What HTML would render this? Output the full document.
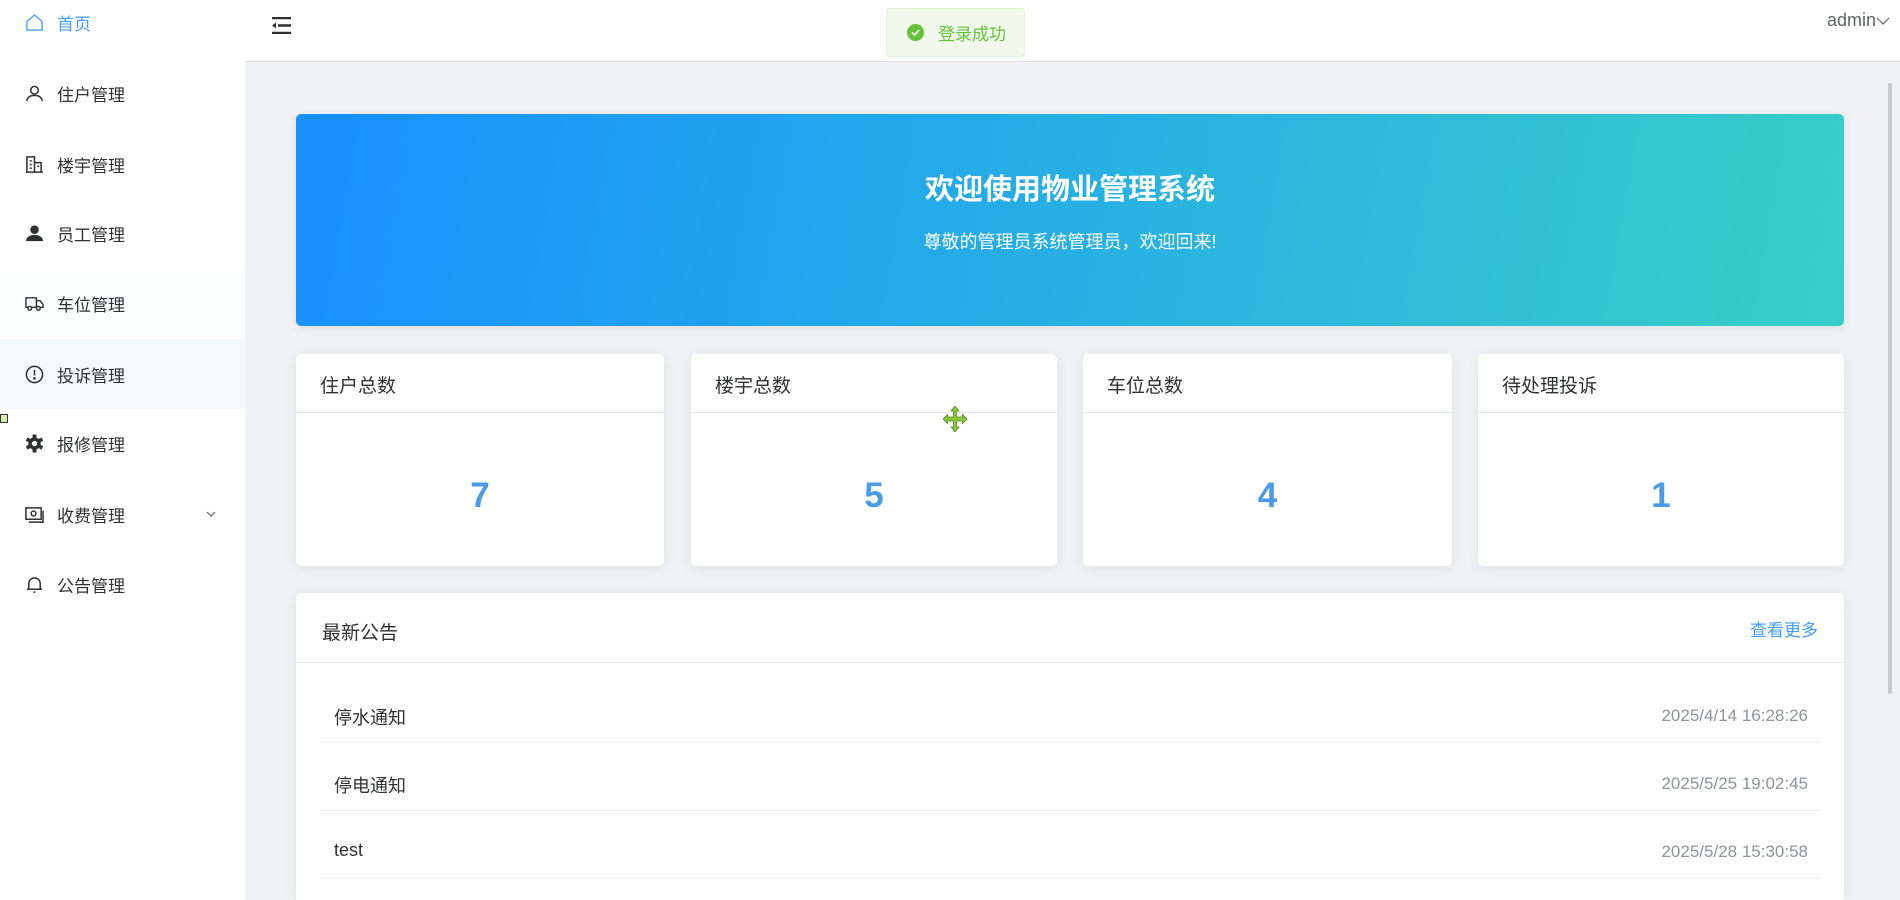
<!DOCTYPE html>
<html style="overflow:hidden;width:1900px;height:900px"><head><meta charset="utf-8">
<style>
*{box-sizing:border-box;margin:0;padding:0}
body{width:1900px;height:900px;overflow:hidden;background:#f0f2f5;font-family:"Liberation Sans","Noto Sans CJK SC",sans-serif;position:relative;color:#303133}
.side{position:absolute;left:0;top:0;width:245px;height:900px;background:#fff}
.item{position:absolute;left:0;width:245px;height:70px;display:flex;align-items:center;font-size:17px;color:#303133}
.item svg{position:absolute;left:25px;width:19px;height:19px}
.item span{position:absolute;left:57px}
.hdr{position:absolute;left:245px;top:0;right:0;height:62px;background:#fff;border-bottom:1px solid #dcdfe6}
.banner{position:absolute;left:296px;top:114px;width:1548px;height:212px;border-radius:5px;background:linear-gradient(100deg,#1890ff,#36cfc9);color:#fff;text-align:center;box-shadow:0 2px 10px rgba(0,0,0,.08)}
.card{position:absolute;top:354px;height:212px;background:#fff;border-radius:5px;box-shadow:0 2px 12px rgba(0,0,0,.08)}
.card .t{height:59px;border-bottom:1px solid #e4e7ed;font-size:19px;padding:17px 0 0 24px;color:#303133}
.card .n{text-align:center;font-size:35px;font-weight:bold;color:#4a9be8;margin-top:63px}
.notice{position:absolute;left:296px;top:593px;width:1548px;height:307px;background:#fff;border-radius:5px 5px 0 0;box-shadow:0 2px 12px rgba(0,0,0,.08);overflow:hidden}
.row{position:absolute;left:24px;width:1501px;height:68px;border-bottom:1px solid #ebeef5;font-size:18px}
.row .a{position:absolute;left:14px;top:29px;color:#303133}
.row .d{position:absolute;right:13px;top:31px;color:#909399;font-size:17px}
</style></head><body>
<div class="side">
 <div class="item" style="top:-13px;color:#409eff"><svg viewBox="0 0 20 20" fill="none" stroke="#409eff" stroke-width="1.4"><path d="M2 9L10 2l8 7v9H2z"/></svg><span>首页</span></div>
 <div class="item" style="top:58px"><svg viewBox="0 0 20 20" fill="none" stroke="#303133" stroke-width="1.6"><circle cx="10" cy="6.5" r="4"/><path d="M2 18c0-4 3.5-6 8-6s8 2 8 6"/></svg><span>住户管理</span></div>
 <div class="item" style="top:129px"><svg viewBox="0 0 20 20" fill="none" stroke="#303133" stroke-width="1.6"><path d="M2 18V2h8v16M10 8h7v10M1 18h18M5 6h2M5 10h2M5 14h2M13 12h2"/></svg><span>楼宇管理</span></div>
 <div class="item" style="top:198px"><svg viewBox="0 0 20 20" fill="#303133"><circle cx="10" cy="6" r="4.5"/><path d="M1 18c0-4 4-6.5 9-6.5s9 2.5 9 6.5z"/></svg><span>员工管理</span></div>
 <div class="item" style="top:268px;background:#fcfdfe"><svg viewBox="0 0 20 20" fill="none" stroke="#303133" stroke-width="1.5"><path d="M1 4h11v10H1zM12 7h4l3 4v3h-7"/><circle cx="5" cy="15" r="2" fill="#fff"/><circle cx="14" cy="15" r="2" fill="#fff"/></svg><span>车位管理</span></div>
 <div class="item" style="top:339px;background:#f5f8fc"><svg viewBox="0 0 20 20" fill="none" stroke="#303133" stroke-width="1.6"><circle cx="10" cy="10" r="8.5"/><path d="M10 5v6"/><circle cx="10" cy="14" r=".6" fill="#303133"/></svg><span>投诉管理</span></div>
 <div class="item" style="top:408px"><svg viewBox="0 0 20 20"><g fill="#303133"><circle cx="10" cy="10" r="6.5"/><rect x="8" y="0.5" width="4" height="19"/><rect x="8" y="0.5" width="4" height="19" transform="rotate(60 10 10)"/><rect x="8" y="0.5" width="4" height="19" transform="rotate(120 10 10)"/></g><circle cx="10" cy="10" r="2.8" fill="#fff"/></svg><span>报修管理</span></div>
 <div class="item" style="top:479px"><svg viewBox="0 0 20 20" fill="none" stroke="#303133" stroke-width="1.6"><rect x="1" y="3" width="16" height="12"/><path d="M4 18h15V6"/><circle cx="9" cy="9" r="2.5"/></svg><span>收费管理</span><svg style="left:205px;width:12px;height:12px" viewBox="0 0 12 12" fill="none" stroke="#606266" stroke-width="1.2"><path d="M2 4l4 4 4-4"/></svg></div>
 <div class="item" style="top:549px"><svg viewBox="0 0 20 20" fill="none" stroke="#303133" stroke-width="1.6"><path d="M4 15V9a6 6 0 0112 0v6zM2 15h16M9 18h2"/></svg><span>公告管理</span></div>
</div>
<div style="position:absolute;left:0;top:414px;width:8px;height:9px;background:#d4edb0;border:1px solid #333"></div>
<div class="hdr">
 <svg style="position:absolute;left:27px;top:17px" width="19" height="17" viewBox="0 0 19 17"><path d="M0 1h19M6 8.5h13M0 16h19" stroke="#303133" stroke-width="2.6"/><path d="M0 8.5l4-3v6z" fill="#303133"/></svg>
 <div style="position:absolute;right:10px;top:10px;font-size:18px;color:#606266">admin<svg width="14" height="10" viewBox="0 0 14 10" fill="none" stroke="#606266" stroke-width="1.2"><path d="M1 2l6 6 6-6"/></svg></div>
</div>
<div style="position:absolute;left:886px;top:8px;width:139px;height:49px;background:#f0f9eb;border:1px solid #e1f3d8;border-radius:4px;font-size:17px;color:#67c23a;display:flex;align-items:center;padding-left:20px">
 <svg width="17" height="17" viewBox="0 0 17 17" style="margin-right:14px"><circle cx="8.5" cy="8.5" r="8.5" fill="#67c23a"/><path d="M5 8.5l2.5 2.5 4.5-5" stroke="#fff" stroke-width="1.6" fill="none"/></svg>登录成功</div>
<div style="position:absolute;left:1888px;top:83px;width:4px;height:611px;background:#c8c9cc;border-radius:2px"></div>
<div class="banner">
 <div style="font-size:29px;font-weight:bold;margin-top:52px">欢迎使用物业管理系统</div>
 <div style="font-size:18px;margin-top:20px">尊敬的管理员系统管理员，欢迎回来!</div>
</div>
<div class="card" style="left:296px;width:368px"><div class="t">住户总数</div><div class="n">7</div></div>
<div class="card" style="left:691px;width:366px"><div class="t">楼宇总数</div><div class="n">5</div></div>
<div class="card" style="left:1083px;width:369px"><div class="t">车位总数</div><div class="n">4</div></div>
<div class="card" style="left:1478px;width:366px"><div class="t">待处理投诉</div><div class="n">1</div></div>
<svg style="position:absolute;left:943px;top:406px" width="24" height="26" viewBox="0 0 24 26"><path d="M12 0l4 5h-2.5v6h6V8.5L24 13l-4.5 4.5V15h-6v6H16l-4 5-4-5h2.5v-6h-6v2.5L0 13l4.5-4.5V11h6V5H8z" fill="#8cc63f" stroke="#5a8a1f" stroke-width=".8"/></svg>
<div class="notice">
 <div style="height:70px;border-bottom:1px solid #e4e7ed;position:relative">
  <div style="position:absolute;left:26px;top:25px;font-size:19px">最新公告</div>
  <div style="position:absolute;right:26px;top:23px;font-size:17px;color:#409eff">查看更多</div>
 </div>
 <div class="row" style="top:82px"><span class="a">停水通知</span><span class="d">2025/4/14 16:28:26</span></div>
 <div class="row" style="top:150px"><span class="a">停电通知</span><span class="d">2025/5/25 19:02:45</span></div>
 <div class="row" style="top:218px"><span class="a">test</span><span class="d">2025/5/28 15:30:58</span></div>
</div>
</body></html>
